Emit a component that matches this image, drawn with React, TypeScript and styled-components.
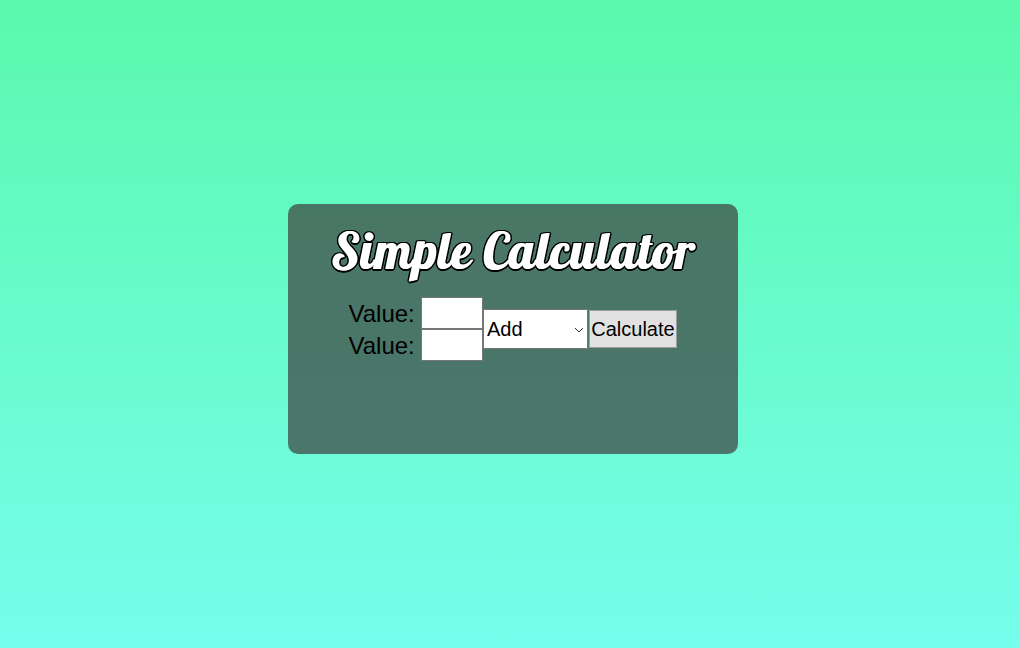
import React from 'react';
import styled, { createGlobalStyle } from 'styled-components';

const GlobalStyle = createGlobalStyle`
  * { box-sizing: border-box; }
  body { margin: 0; font-family: "Liberation Sans", Arial, sans-serif; }
`;

const Page = styled.main`
  height: 100vh;
  min-height: 648px;
  padding: 10px 0 0 6px;
  display: flex;
  align-items: center;
  justify-content: center;
  background: linear-gradient(#5af9ad, #76fdec);
`;

const Card = styled.section`
  width: 450px;
  height: 250px;
  display: flex;
  flex-direction: column;
  align-items: center;
  border-radius: 10px;
  background: rgba(61, 61, 61, 0.7);
`;

const Title = styled.h1`
  margin: 0;
  height: 93px;
  font: 400 50px/94px Lobster, "Liberation Serif", cursive;
  letter-spacing: 0.96px;
  word-spacing: -1px;
  white-space: nowrap;
  color: #fff;
  text-shadow: 1px 0 #fff, -1px -1px #000, 2px -1px #000, -1px 1px #000,
    2px 1px #000, 0 -1.5px #000, 1px -1.5px #000, 0 1.5px #000,
    1px 1.5px #000, -1.5px 0 #000, 2.5px 0 #000;
`;

const Form = styled.form`
  display: flex;
  align-items: center;
  margin-right: 1px;
`;

const Fields = styled.div`
  display: flex;
  flex-direction: column;
`;

const Field = styled.label`
  height: 32px;
  display: flex;
  align-items: center;
  justify-content: space-between;
  width: 135px;
  font-size: 24px;
  line-height: 30px;
  color: #000;
`;

const FieldText = styled.span`
  padding: 2px 0 0 0.5px;
`;

const NumberInput = styled.input`
  width: 62px;
  height: 32px;
  padding: 1px 2px;
  border: 1px solid #767676;
  border-radius: 0;
  background: #fff;
  font: 24px "Liberation Sans", Arial, sans-serif;
`;

const SelectBox = styled.div`
  display: grid;
  align-items: center;
  width: 105px;
  height: 40px;
`;

const Select = styled.select`
  grid-area: 1 / 1;
  appearance: none;
  width: 105px;
  height: 40px;
  padding: 0 3px 1px;
  border: 1px solid #767676;
  border-radius: 0;
  background: #fff;
  color: #000;
  font: 20px "Liberation Sans", Arial, sans-serif;
`;

const Chevron = styled.svg`
  grid-area: 1 / 1;
  justify-self: end;
  margin: 2px 4px 0 0;
  pointer-events: none;
`;

const Button = styled.button`
  width: 88px;
  height: 38px;
  margin-left: 1px;
  padding: 1px 0 0;
  border: 1px solid #a0a0a0;
  background: #e1e1e1;
  color: #000;
  font: 20px "Liberation Sans", Arial, sans-serif;
`;

export default function App() {
  return (
    <>
      <GlobalStyle />
      <Page>
        <Card>
          <Title>Simple Calculator</Title>
          <Form onSubmit={(e) => e.preventDefault()}>
            <Fields>
              <Field><FieldText>Value:</FieldText><NumberInput /></Field>
              <Field><FieldText>Value:</FieldText><NumberInput /></Field>
            </Fields>
            <SelectBox>
              <Select defaultValue="Add">
                <option>Add</option>
                <option>Subtract</option>
                <option>Multiply</option>
                <option>Divide</option>
              </Select>
              <Chevron width="10" height="6" viewBox="0 0 10 6" fill="none" stroke="#333">
                <path d="M1 1l4 4 4-4" />
              </Chevron>
            </SelectBox>
            <Button type="submit">Calculate</Button>
          </Form>
        </Card>
      </Page>
    </>
  );
}
